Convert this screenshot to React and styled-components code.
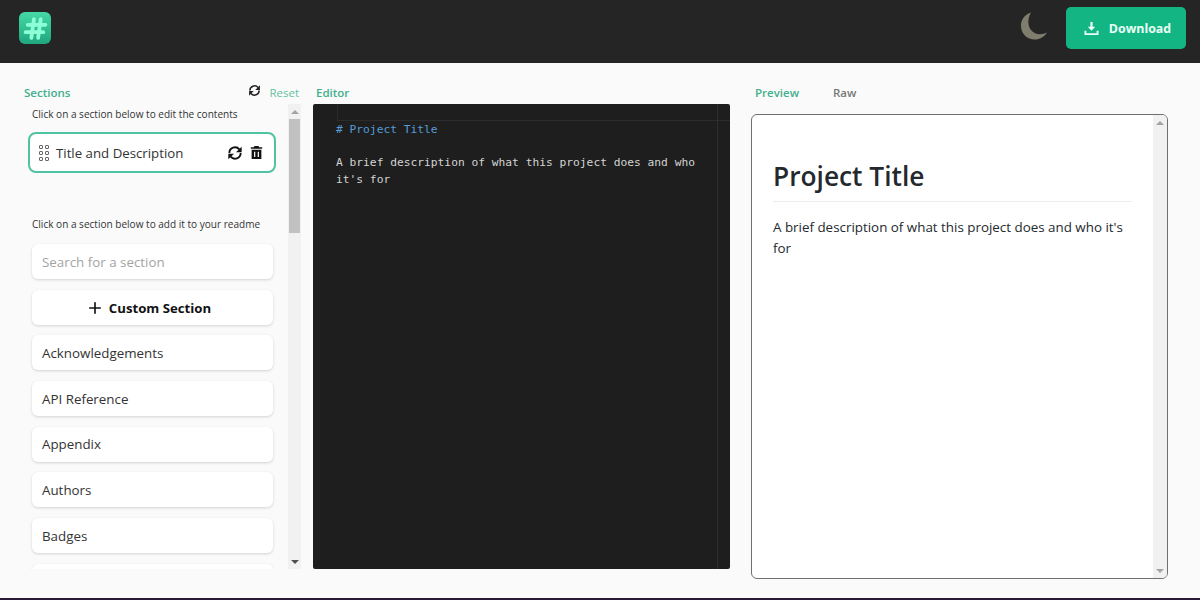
import React from "react";
import styled, { createGlobalStyle } from "styled-components";
import { Plus } from "lucide-react";

const Global = createGlobalStyle`
  html, body { margin: 0; padding: 0; background: #fafafa; }
  * { box-sizing: border-box; }
  body { font-family: "Open Sans", "Noto Sans", sans-serif; }
`;

const Page = styled.div`
  width: 1200px;
  height: 600px;
  display: flex;
  flex-direction: column;
  background: #fafafa;
  border-bottom: 2px solid #2a1a38;
  overflow: hidden;
`;

const Header = styled.header`
  height: 63px;
  flex: none;
  background: #252525;
  display: flex;
  align-items: flex-start;
  justify-content: space-between;
  padding: 7px 14px 0 19px;
`;

const Logo = styled.div`
  width: 32px;
  height: 32px;
  margin-top: 5px;
  border-radius: 6px;
  background: linear-gradient(180deg, #45d9a6 0%, #1fa67e 100%);
  display: flex;
  align-items: center;
  justify-content: center;
`;

const LogoMark = styled.svg`
  width: 25px;
  height: 25px;
  filter: blur(0.6px);
`;

const HeaderActions = styled.div`
  display: flex;
  align-items: flex-start;
  gap: 17px;
`;

const MoonIcon = styled.svg`
  width: 30px;
  height: 30px;
  margin-top: 4px;
`;

const DownloadButton = styled.button`
  width: 120px;
  height: 42px;
  border: 0;
  border-radius: 5px;
  background: #13b683;
  color: #e9fff6;
  display: flex;
  align-items: center;
  justify-content: center;
  gap: 10px;
  font: 700 12.4px "Open Sans", sans-serif;
  padding: 0 0 0 3px;
`;

const Main = styled.main`
  flex: 1;
  min-height: 0;
  display: flex;
  padding: 19px 0 0 24px;
`;

const Column = styled.section`
  flex: none;
  width: ${(p) => p.$w}px;
  margin-left: ${(p) => p.$ml || 0}px;
  display: flex;
  flex-direction: column;
  min-height: 0;
`;

const LabelRow = styled.div`
  height: 22px;
  display: flex;
  align-items: flex-start;
  justify-content: ${(p) => p.$justify || "flex-start"};
  padding-left: ${(p) => p.$indent || 0}px;
  padding-right: ${(p) => p.$right || 0}px;
  line-height: 22px;
`;

const Label = styled.span`
  font-size: 11.5px;
  font-weight: 600;
  color: ${(p) => (p.$muted ? "#777" : "#3fb08c")};
`;

const ResetLink = styled.span`
  display: flex;
  align-items: center;
  gap: 8px;
  font-size: 11.5px;
  color: #66bfa3;
`;

const ResetIcon = styled.span`
  display: flex;
  margin: -6px 0 0;
  color: #222;
`;

const SectionsBody = styled.div`
  height: 465px;
  display: flex;
  min-height: 0;
`;

const SectionsList = styled.div`
  width: 264px;
  overflow: hidden;
  padding: 0 0 0 4px;
`;

const Hint = styled.p`
  margin: 0;
  padding-left: 4px;
  height: 20px;
  line-height: 21px;
  font-size: 10.05px;
  color: #333;
`;

const ActiveCard = styled.div`
  width: 248px;
  height: 41px;
  margin: 8px 0 41px;
  border: 2px solid #4fc4a2;
  border-radius: 8px;
  background: #fff;
  display: flex;
  align-items: center;
  padding: 0 11px 0 8px;
  font-size: 13.25px;
  color: #333;
`;

const DragIcon = styled.svg`
  width: 12px;
  height: 18px;
  margin-right: 6px;
  flex: none;
`;

const CardTitle = styled.span`
  flex: 1;
`;

const CardActions = styled.span`
  display: flex;
  align-items: center;
  gap: 7px;
  color: #111;
`;

const Cards = styled.div`
  display: flex;
  flex-direction: column;
  gap: 10.7px;
  padding: 10px 0 0 4px;
  width: 245px;
`;

const Card = styled.div`
  flex: none;
  height: 35px;
  border-radius: 6px;
  background: #fff;
  box-shadow: 0 1px 3px rgba(0, 0, 0, 0.16);
  display: flex;
  align-items: center;
  justify-content: ${(p) => (p.$center ? "center" : "flex-start")};
  gap: 5px;
  padding: ${(p) => (p.$center ? "2px 18px 0 10px" : "0 10px")};
  font-size: ${(p) => (p.$bold ? "13.2px" : "13.35px")};
  font-weight: ${(p) => (p.$bold ? 700 : 400)};
  color: ${(p) => (p.$placeholder ? "#a3a3a3" : p.$bold ? "#111" : "#333")};
`;

const Scrollbar = styled.div`
  width: ${(p) => p.$w}px;
  flex: none;
  display: flex;
  flex-direction: column;
  align-items: center;
  background: #f1f1f1;
`;

const ArrowBox = styled.div`
  flex: none;
  height: 15px;
  display: flex;
  align-items: center;
  justify-content: center;
`;

const Arrow = styled.div`
  width: 0;
  height: 0;
  border-left: 4px solid transparent;
  border-right: 4px solid transparent;
  ${(p) =>
    p.$up
      ? `border-bottom: 4px solid ${p.$color};`
      : `border-top: 4px solid ${p.$color};`}
`;

const Track = styled.div`
  flex: 1;
  width: 100%;
  padding: 0 1px;
`;

const Thumb = styled.div`
  height: ${(p) => p.$h}px;
  background: #c1c1c1;
`;

const Editor = styled.div`
  height: 465px;
  background: #1e1e1e;
  border-radius: 2px;
  position: relative;
  padding: 18px 30px 0 23px;
  font: 11.25px/16.5px "DejaVu Sans Mono", monospace;
  color: #d4d4d4;
`;

const Heading = styled.div`
  color: #569cd6;
`;

const ActiveLine = styled.div`
  position: absolute;
  left: 24px;
  right: 0;
  top: 0;
  height: 17px;
  border-left: 1px solid #2c2c2c;
  border-bottom: 1px solid #2c2c2c;
`;

const Ruler = styled.div`
  position: absolute;
  top: 0;
  bottom: 0;
  right: 12px;
  width: 1px;
  background: #2f2f2f;
`;

const CodeBlank = styled.div`
  height: 16.5px;
`;

const Tabs = styled.div`
  height: 22px;
  display: flex;
  align-items: flex-start;
  gap: 34px;
  padding-left: 4px;
  line-height: 22px;
`;

const PreviewBox = styled.div`
  height: 465px;
  margin-top: 10px;
  border: 1px solid #6f6f6f;
  border-radius: 6px;
  background: #fff;
  display: flex;
  overflow: hidden;
`;

const PreviewContent = styled.article`
  flex: 1;
  padding: 44px 21px 0 21px;
  color: #24292e;
`;

const H1 = styled.h1`
  margin: 0 0 15px;
  padding-bottom: 8px;
  border-bottom: 1px solid #eaecef;
  font-size: 26.3px;
  line-height: 34px;
  font-weight: 600;
`;

const Para = styled.p`
  margin: 0;
  font-size: 13.38px;
  line-height: 21px;
`;

const SyncIcon = ({ size }) => (
  <svg width={size} height={size} viewBox="0 0 24 24" fill="none">
    <path d="M3.500 12a8.500 8.500 0 0 1 15-5.500M20.500 12a8.500 8.500 0 0 1-15 5.500" stroke="currentColor" strokeWidth="2.8" />
    <path d="M22 2.500V11h-8.500ZM2 21.500V13h8.500Z" fill="currentColor" />
  </svg>
);

const TrashIcon = ({ size }) => (
  <svg width={size} height={size} viewBox="0 0 16 16">
    <path
      fillRule="evenodd"
      d="M5.500 0h5l.7 1.500H15V3.500H1V1.500h3.800ZM2 4.500h12V16H2ZM5 7v6.500h1.500V7Zm4.500 0v6.500H11V7Z"
      fill="currentColor"
    />
  </svg>
);

const DownloadIcon = () => (
  <svg width="15" height="15" viewBox="0 0 16 16" fill="none">
    <path d="M6.800 1h2.400v5H12L8 10.500 4 6h2.800Z" fill="currentColor" />
    <path d="M1.500 10.500v3.500h13v-3.500" stroke="currentColor" strokeWidth="2" />
  </svg>
);

const sections = ["Acknowledgements", "API Reference", "Appendix", "Authors", "Badges"];

export default function App() {
  return (
    <Page>
      <Global />
      <Header>
        <Logo>
          <LogoMark viewBox="0 0 24 24" fill="none" stroke="#8dffd6" strokeWidth="3.6" strokeLinecap="round">
            <path d="M10.500 3 8 21M17 3l-2.500 18M4.500 8.500h17M2.500 15.500h17" />
          </LogoMark>
        </Logo>
        <HeaderActions>
          <MoonIcon viewBox="0 0 30 30">
            <path d="M12 1.500C4.500 4 1.500 10 2 16c.6 7 6.500 12.500 13.500 12.500 5.500 0 10-2.700 12.500-7-6 3-12.500 2-16-2.500C8.500 14.500 8.500 7.500 12 1.500Z" fill="#7f7d6e" />
          </MoonIcon>
          <DownloadButton>
            <DownloadIcon />
            Download
          </DownloadButton>
        </HeaderActions>
      </Header>
      <Main>
        <Column $w={277}>
          <LabelRow $justify="space-between" $right={2}>
            <Label>Sections</Label>
            <ResetLink>
              <ResetIcon><SyncIcon size={13} /></ResetIcon>
              Reset
            </ResetLink>
          </LabelRow>
          <SectionsBody>
            <SectionsList>
              <Hint>Click on a section below to edit the contents</Hint>
              <ActiveCard>
                <DragIcon viewBox="0 0 12 18" fill="none" stroke="#666" strokeWidth="1">
                  <rect x="1.500" y="1.500" width="3" height="3" rx="0.5" />
                  <rect x="7.500" y="1.500" width="3" height="3" rx="0.5" />
                  <rect x="1.500" y="7.500" width="3" height="3" rx="0.5" />
                  <rect x="7.500" y="7.500" width="3" height="3" rx="0.5" />
                  <rect x="1.500" y="13.500" width="3" height="3" rx="0.5" />
                  <rect x="7.500" y="13.500" width="3" height="3" rx="0.5" />
                </DragIcon>
                <CardTitle>Title and Description</CardTitle>
                <CardActions>
                  <SyncIcon size={16} />
                  <TrashIcon size={13} />
                </CardActions>
              </ActiveCard>
              <Hint>Click on a section below to add it to your readme</Hint>
              <Cards>
                <Card $placeholder>Search for a section</Card>
                <Card $center $bold>
                  <Plus size={18} strokeWidth={2.2} />
                  Custom Section
                </Card>
                {sections.map((s) => (
                  <Card key={s}>{s}</Card>
                ))}
                <Card />
              </Cards>
            </SectionsList>
            <Scrollbar $w={13}>
              <ArrowBox><Arrow $up $color="#a3a3a3" /></ArrowBox>
              <Track><Thumb $h={114} /></Track>
              <ArrowBox><Arrow $color="#505050" /></ArrowBox>
            </Scrollbar>
          </SectionsBody>
        </Column>
        <Column $w={417} $ml={12}>
          <LabelRow $indent={3}><Label>Editor</Label></LabelRow>
          <Editor>
            <ActiveLine />
            <Ruler />
            <Heading># Project Title</Heading>
            <CodeBlank />
            A brief description of what this project does and who it's for
          </Editor>
        </Column>
        <Column $w={417} $ml={21}>
          <Tabs>
            <Label>Preview</Label>
            <Label $muted>Raw</Label>
          </Tabs>
          <PreviewBox>
            <PreviewContent>
              <H1>Project Title</H1>
              <Para>A brief description of what this project does and who it's for</Para>
            </PreviewContent>
            <Scrollbar $w={14}>
              <ArrowBox><Arrow $up $color="#a3a3a3" /></ArrowBox>
              <Track />
              <ArrowBox><Arrow $color="#a3a3a3" /></ArrowBox>
            </Scrollbar>
          </PreviewBox>
        </Column>
      </Main>
    </Page>
  );
}
